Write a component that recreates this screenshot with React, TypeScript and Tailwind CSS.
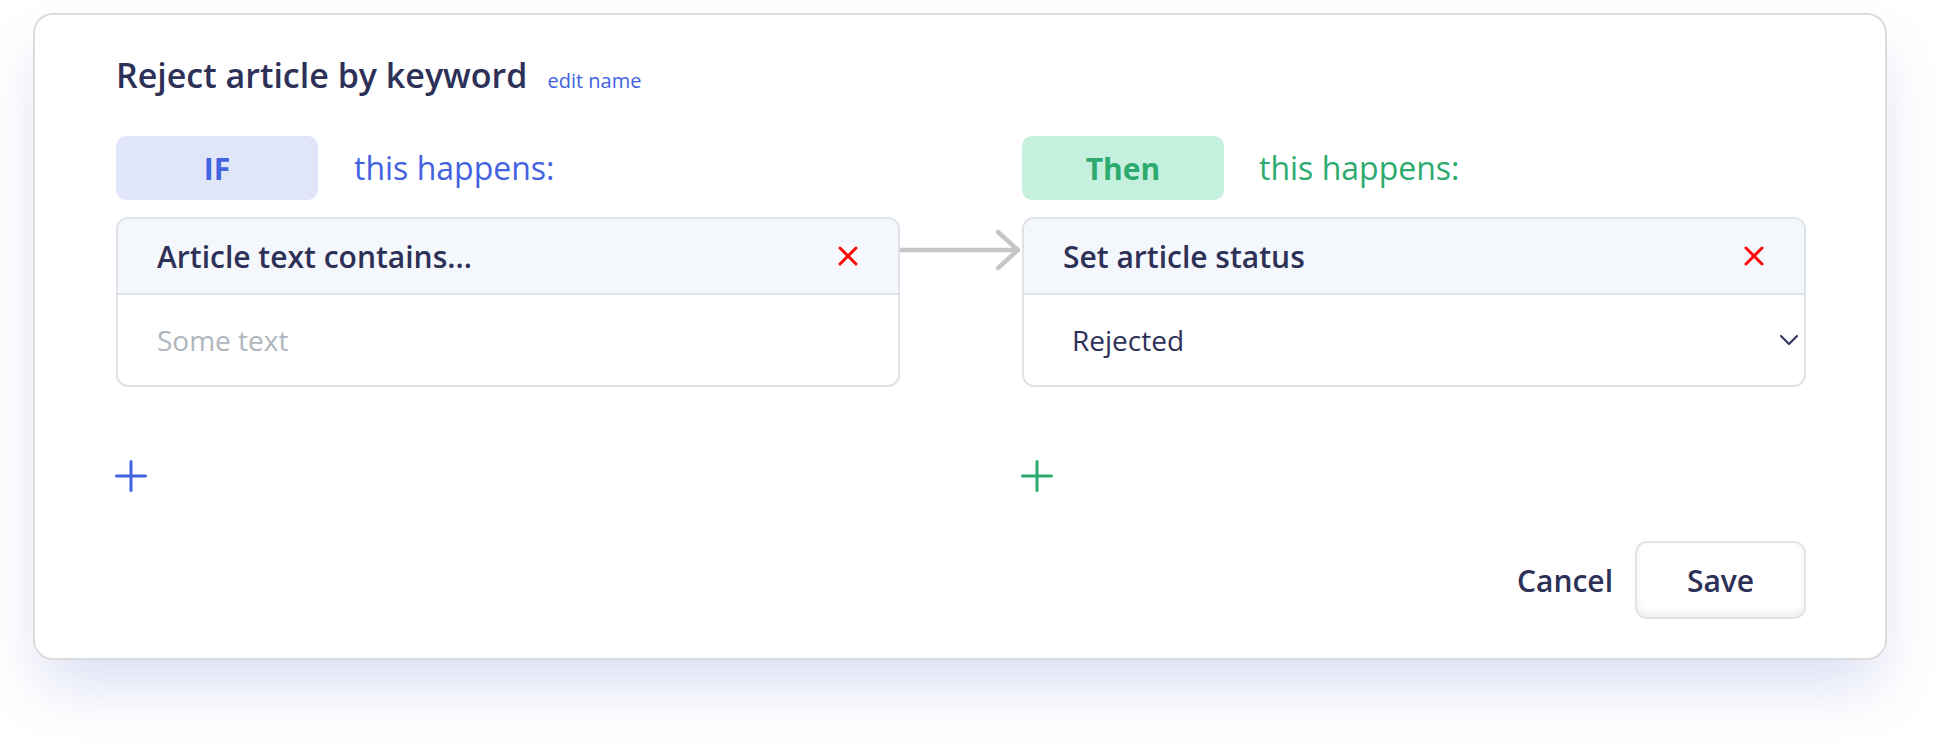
import React from 'react';

const CloseIcon = () => (
  <svg width="20" height="20" viewBox="0 0 20 20" fill="none" stroke="#ff0a0a" strokeWidth="3" strokeLinecap="round">
    <line x1="2" y1="2" x2="18" y2="18" />
    <line x1="18" y1="2" x2="2" y2="18" />
  </svg>
);

const PlusIcon = ({ color }: { color: string }) => (
  <svg width="32" height="32" viewBox="0 0 32 32" fill="none" stroke={color} strokeWidth="3" strokeLinecap="round">
    <line x1="16" y1="1.5" x2="16" y2="30.5" />
    <line x1="1.5" y1="16" x2="30.5" y2="16" />
  </svg>
);

const ChevronDown = () => (
  <svg width="18" height="10" viewBox="0 0 18 10" fill="none" stroke="#2d3057" strokeWidth="2" strokeLinecap="round" strokeLinejoin="round">
    <polyline points="1 1 9 9 17 1" />
  </svg>
);

const Arrow = () => (
  <svg width="122" height="44" viewBox="0 0 122 44" fill="none" stroke="#c6c6c6" strokeWidth="4.5" strokeLinecap="round" strokeLinejoin="round">
    <line x1="0" y1="22" x2="117" y2="22" />
    <polyline points="98 4 118 22 98 40" />
  </svg>
);

const App: React.FC = () => {
  return (
    <div className="min-h-[746px] w-full bg-white font-['Open_Sans',sans-serif] text-[#2d3057] pt-[13px] pl-[33px]">
      <div className="w-[1854px] h-[647px] rounded-[20px] border-2 border-[#dcdcdc] bg-white shadow-[0_32px_60px_-8px_rgba(76,94,200,0.21)] pl-[81px] pt-[40px] flex flex-col">
        {/* title */}
        <div className="flex items-baseline gap-[20px] h-[40px]">
          <h1 className="text-[34px] leading-[40px] font-semibold">Reject article by keyword</h1>
          <button className="text-[20px] leading-[40px] text-[#4262e0]">edit name</button>
        </div>

        <div className="mt-[41px] grid grid-cols-[784px_122px_784px]">
          {/* badges */}
          <div className="flex items-center gap-[36px]">
            <div className="w-[202px] h-[64px] rounded-[10px] bg-[#e0e6f8] flex items-center justify-center text-[30px] font-bold text-[#4262e0]">IF</div>
            <span className="text-[32px] text-[#4262e0]">this happens:</span>
          </div>
          <div />
          <div className="flex items-center gap-[35px]">
            <div className="w-[202px] h-[64px] rounded-[10px] bg-[#c6f0de] flex items-center justify-center text-[30px] font-bold text-[#2dab6f]">Then</div>
            <span className="text-[32px] text-[#2dab6f]">this happens:</span>
          </div>

          {/* boxes */}
          <div className="mt-[17px] h-[170px] rounded-[12px] border-2 border-[#dfe3e8] overflow-hidden flex flex-col">
            <div className="h-[76px] shrink-0 bg-[#f4f7fb] border-b-2 border-[#dfe3e8] flex items-center justify-between pl-[39px] pr-[40px]">
              <span className="text-[30px] font-semibold">Article text contains...</span>
              <CloseIcon />
            </div>
            <div className="flex-1 flex items-center pl-[39px]">
              <span className="text-[28px] text-[#b0b6be]">Some text</span>
            </div>
          </div>
          <div className="mt-[28px]">
            <Arrow />
          </div>
          <div className="mt-[17px] h-[170px] rounded-[12px] border-2 border-[#dfe3e8] overflow-hidden flex flex-col">
            <div className="h-[76px] shrink-0 bg-[#f4f7fb] border-b-2 border-[#dfe3e8] flex items-center justify-between pl-[39px] pr-[40px]">
              <span className="text-[30px] font-semibold">Set article status</span>
              <CloseIcon />
            </div>
            <div className="flex-1 flex items-center justify-between pl-[48px] pr-[6px]">
              <span className="text-[28px]">Rejected</span>
              <ChevronDown />
            </div>
          </div>

          {/* add buttons */}
          <div className="mt-[73px] h-[32px]">
            <button className="block -ml-px"><PlusIcon color="#4262e0" /></button>
          </div>
          <div />
          <div className="mt-[73px] h-[32px]">
            <button className="block -ml-px"><PlusIcon color="#2dab6f" /></button>
          </div>
        </div>

        {/* footer */}
        <div className="mt-[49px] w-[1690px] flex items-center justify-end gap-[22px]">
          <button className="text-[30px] font-semibold">Cancel</button>
          <button className="w-[171px] h-[78px] rounded-[12px] border-2 border-[#e1e4e9] bg-white text-[30px] font-semibold shadow-[inset_0_-4px_6px_rgba(0,0,0,0.07)]">Save</button>
        </div>
      </div>
    </div>
  );
};

export default App;
